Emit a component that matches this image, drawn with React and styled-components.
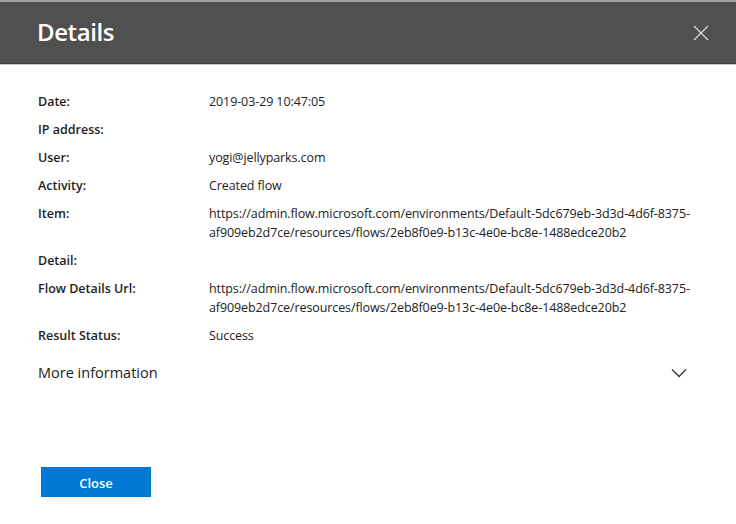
import React from "react";
import styled, { createGlobalStyle } from "styled-components";

const rows = [
    { label: "Date:", value: "2019-03-29 10:47:05" },
    { label: "IP address:", value: "" },
    { label: "User:", value: "yogi@jellyparks.com" },
    { label: "Activity:", value: "Created flow" },
    {
        label: "Item:",
        value: "https://admin.flow.microsoft.com/environments/Default-5dc679eb-3d3d-4d6f-8375-af909eb2d7ce/resources/flows/2eb8f0e9-b13c-4e0e-bc8e-1488edce20b2",
    },
    { label: "Detail:", value: "" },
    {
        label: "Flow Details Url:",
        value: "https://admin.flow.microsoft.com/environments/Default-5dc679eb-3d3d-4d6f-8375-af909eb2d7ce/resources/flows/2eb8f0e9-b13c-4e0e-bc8e-1488edce20b2",
    },
    { label: "Result Status:", value: "Success" },
];

const App = () => {
    return (
        <>
            <GlobalStyle />
            <Panel>
                <Header>
                    <Title>Details</Title>
                    <IconButton aria-label="Close">
                        <svg width="16" height="16" viewBox="0 0 16 16">
                            <path d="M1 1L15 15M15 1L1 15" stroke="#d8d8d8" strokeWidth="1.3" fill="none" />
                        </svg>
                    </IconButton>
                </Header>
                <Body>
                    <List>
                        {rows.map((r) => (
                            <Row key={r.label}>
                                <Label>{r.label}</Label>
                                <Value>{r.value}</Value>
                            </Row>
                        ))}
                    </List>
                    <More>
                        <span>More information</span>
                        <svg width="16" height="10" viewBox="0 0 16 10">
                            <path d="M1 1.5L8 8.5L15 1.5" stroke="#333" strokeWidth="1.3" fill="none" />
                        </svg>
                    </More>
                </Body>
                <Footer>
                    <PrimaryButton>Close</PrimaryButton>
                </Footer>
            </Panel>
        </>
    );
};

//Styled-Components
const GlobalStyle = createGlobalStyle`
    html, body {
        margin: 0;
        padding: 0;
        background: #ffffff;
    }
    body {
        font-family: "Open Sans", "Noto Sans", sans-serif;
        color: #222;
    }
`;
const Panel = styled.div`
    width: 736px;
    height: 524px;
    display: flex;
    flex-direction: column;
    background: #fff;
`;
const Header = styled.div`
    height: 61px;
    border-top: 2px solid #a2a2a2;
    border-bottom: 1px solid #3e3e3e;
    box-shadow: 0 1px 0 #c9c9c9;
    background: #505050;
    display: flex;
    align-items: center;
    justify-content: space-between;
    padding: 0 27px 0 37px;
    flex-shrink: 0;
`;
const Title = styled.h1`
    margin: 0 0 2px;
    font-size: 24px;
    font-weight: 600;
    color: #fff;
    letter-spacing: -0.4px;
`;
const IconButton = styled.button`
    border: none;
    background: none;
    padding: 0;
    display: flex;
    cursor: pointer;
`;
const Body = styled.div`
    padding: 28px 40px 0 38px;
`;
const List = styled.div`
    display: flex;
    flex-direction: column;
    gap: 9px;
`;
const Row = styled.div`
    display: grid;
    grid-template-columns: 171px 1fr;
    font-size: 12.5px;
    line-height: 19px;
    min-height: 19px;
`;
const Label = styled.div`
    font-weight: 600;
    color: #1e1e1e;
`;
const Value = styled.div`
    color: #222;
    letter-spacing: -0.1px;
`;
const More = styled.div`
    margin-top: 17px;
    display: flex;
    align-items: center;
    justify-content: space-between;
    padding-right: 9px;
    font-size: 14.5px;
    line-height: 21px;
    color: #222;
`;
const Footer = styled.div`
    margin-top: auto;
    padding: 0 0 27px 41px;
`;
const PrimaryButton = styled.button`
    width: 110px;
    height: 30px;
    border: none;
    background: #0078d4;
    color: #fff;
    font-family: "Open Sans", sans-serif;
    font-size: 13px;
    font-weight: 600;
    padding-top: 2px;
    cursor: pointer;
`;

export default App;
